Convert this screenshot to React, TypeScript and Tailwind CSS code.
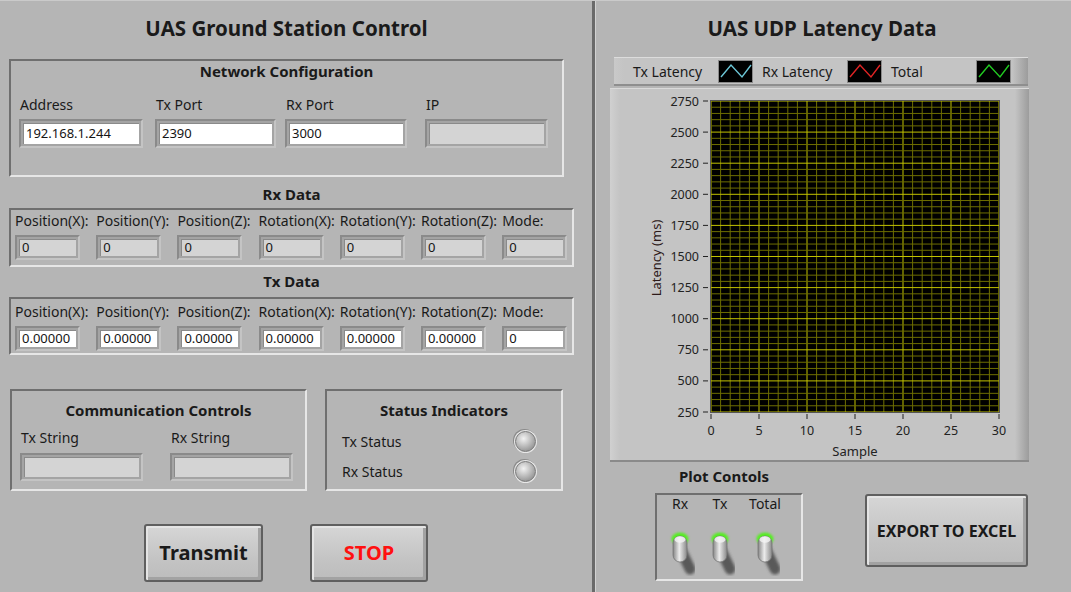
import React from "react";

const GROUP =
  "border-2 border-t-[#6f6f6f] border-l-[#6f6f6f] border-b-[#e6e6e6] border-r-[#e6e6e6]";

function Field({
  className,
  value,
  light,
}: {
  className: string;
  value?: string;
  light?: boolean;
}) {
  return (
    <div
      className={`${className} border-2 border-t-[#8a8a8a] border-l-[#8a8a8a] border-b-[#c4c4c4] border-r-[#c4c4c4] bg-[#a4a4a4] p-[2px]`}
    >
      <div
        className={`h-full ${
          light ? "bg-white" : "bg-[#d4d4d4]"
        } shadow-[inset_1px_1px_0_#8a8a8a] text-[13px] leading-none flex items-center pl-[3px] text-[#151515] whitespace-nowrap overflow-hidden`}
      >
        {value}
      </div>
    </div>
  );
}

function LED() {
  return (
    <div className="w-[23px] h-[23px] rounded-full bg-[#e8e8e8] p-[1px] shadow-[-1px_-1px_0_#8a8a8a]">
      <div className="w-full h-full rounded-full border border-[#777] bg-[radial-gradient(circle_at_40%_35%,#f2f2f2_0%,#c2c2c2_40%,#8c8c8c_85%)]" />
    </div>
  );
}

function Toggle() {
  return (
    <svg width="40" height="46" viewBox="0 0 40 46">
      <defs>
        <filter id="tb" x="-50%" y="-50%" width="200%" height="200%">
          <feGaussianBlur stdDeviation="1.4" />
        </filter>
        <filter id="gb" x="-50%" y="-50%" width="200%" height="200%">
          <feGaussianBlur stdDeviation="1.1" />
        </filter>
        <linearGradient id="lev" x1="0" x2="1" y1="0" y2="0">
          <stop offset="0" stopColor="#858585" />
          <stop offset="0.45" stopColor="#ececec" />
          <stop offset="1" stopColor="#888" />
        </linearGradient>
      </defs>
      <line x1="21" y1="20" x2="30" y2="39" stroke="#4a4a4a" strokeWidth="11" strokeLinecap="round" opacity="0.85" filter="url(#tb)" />
      <ellipse cx="20" cy="9" rx="8.5" ry="6.5" fill="#55ee22" filter="url(#gb)" />
      <rect x="13" y="6" width="14" height="26" rx="7" fill="url(#lev)" stroke="#6e6e6e" strokeWidth="0.7" />
      <ellipse cx="20" cy="9.5" rx="5.5" ry="3.2" fill="#f4f4f4" opacity="0.8" />
    </svg>
  );
}

function Swatch({ color }: { color: string }) {
  return (
    <svg width="35" height="23" viewBox="0 0 35 23" className="block">
      <rect x="0.5" y="0.5" width="34" height="22" fill="#000" stroke="#8a8a8a" />
      <polyline points="3,17 13,5 24,17 33,5" fill="none" stroke={color} strokeWidth="1.4" />
    </svg>
  );
}

function Graph() {
  const px0 = 101,
    px1 = 389,
    py0 = 12,
    py1 = 323;
  const w = px1 - px0;
  const h = py1 - py0;
  const vMinor: number[] = [];
  for (let i = 0; i <= 30; i++) vMinor.push(px0 + (w * i) / 30);
  const hMinor: number[] = [];
  for (let i = 0; i <= 50; i++) hMinor.push(py0 + (h * i) / 50);
  const yLabels = [2750, 2500, 2250, 2000, 1750, 1500, 1250, 1000, 750, 500, 250];
  const xLabels = [0, 5, 10, 15, 20, 25, 30];
  return (
    <svg width="419" height="374" viewBox="0 0 419 374" className="block">
      <rect x={px0} y={py0} width={w} height={h} fill="#000" />
      {vMinor.map((x, i) => (
        <line key={"v" + i} x1={x} x2={x} y1={py0} y2={py1} stroke={i % 5 === 0 ? "#c2c200" : "#6e6e00"} strokeWidth="1" />
      ))}
      {hMinor.map((y, i) => (
        <line key={"h" + i} x1={px0} x2={px1} y1={y} y2={y} stroke={i % 5 === 0 ? "#c2c200" : "#6e6e00"} strokeWidth="1" />
      ))}
      <rect x={px0 - 0.5} y={py0 - 0.5} width={w + 1} height={h + 1} fill="none" stroke="#555" />
      {yLabels.map((v, i) => {
        const y = py0 + (h * i) / 10;
        return (
          <g key={v}>
            <line x1={93} x2={98} y1={y} y2={y} stroke="#222" />
            <text x={89} y={y + 4.5} textAnchor="end" fontSize="12.5" fill="#222" fontFamily="'Noto Sans', sans-serif">
              {v}
            </text>
          </g>
        );
      })}
      {xLabels.map((v, i) => {
        const x = px0 + (w * i) / 6;
        return (
          <g key={v}>
            <line x1={x} x2={x} y1={325} y2={330} stroke="#222" />
            <text x={x} y={346} textAnchor="middle" fontSize="12.5" fill="#222" fontFamily="'Noto Sans', sans-serif">
              {v}
            </text>
          </g>
        );
      })}
      <text x={245} y={367} textAnchor="middle" fontSize="13" fill="#222" fontFamily="'Noto Sans', sans-serif">
        Sample
      </text>
      <text
        x={0}
        y={0}
        transform="translate(51 169) rotate(-90)"
        textAnchor="middle"
        fontSize="13"
        fill="#2d1a1a"
        fontFamily="'Noto Sans', sans-serif"
      >
        Latency (ms)
      </text>
    </svg>
  );
}

const BTN =
  "rounded-[3px] border-2 border-[#5f5f5f] bg-[linear-gradient(to_bottom,#d6d6d6,#c4c4c4_60%,#bcbcbc)] shadow-[inset_2px_2px_0_#e4e4e4,inset_-3px_-3px_0_#a2a2a2] flex items-center justify-center font-bold";

export default function App() {
  const cols = [
    "Position(X):",
    "Position(Y):",
    "Position(Z):",
    "Rotation(X):",
    "Rotation(Y):",
    "Rotation(Z):",
    "Mode:",
  ];
  return (
    <div className="w-[1071px] h-[592px] bg-[#b5b5b5] flex font-['Noto_Sans',sans-serif] text-[#1a1a1a] overflow-hidden border-t border-[#cacaca]">
      {/* LEFT PANEL */}
      <div className="w-[592px] flex flex-col shrink-0">
        <div className="ml-[9px] w-[555px] mt-[13px] h-[28px] text-center text-[20.5px] font-bold leading-[28px]">
          UAS Ground Station Control
        </div>
        <div className={`ml-[9px] w-[555px] h-[118px] mt-[17px] ${GROUP}`}>
          <div className="h-[20px] leading-[20px] text-center text-[15px] font-bold">Network Configuration</div>
          <div className="flex mt-[14px] pl-[8px]">
            <div className="w-[124px]">
              <div className="h-[20px] leading-[20px] text-[14px] pl-[1px]">Address</div>
              <Field className="mt-[4px] h-[29px]" value="192.168.1.244" light />
            </div>
            <div className="w-[121px] ml-[12px]">
              <div className="h-[20px] leading-[20px] text-[14px] pl-[1px]">Tx Port</div>
              <Field className="mt-[4px] h-[29px]" value="2390" light />
            </div>
            <div className="w-[122px] ml-[9px]">
              <div className="h-[20px] leading-[20px] text-[14px] pl-[1px]">Rx Port</div>
              <Field className="mt-[4px] h-[29px]" value="3000" light />
            </div>
            <div className="w-[123px] ml-[18px]">
              <div className="h-[20px] leading-[20px] text-[14px] pl-[1px]">IP</div>
              <Field className="mt-[4px] h-[29px]" />
            </div>
          </div>
        </div>

        <div className="ml-[9px] w-[565px] mt-[7px] h-[20px] leading-[20px] text-center text-[15px] font-bold">Rx Data</div>
        <div className={`ml-[9px] w-[565px] h-[59px] mt-[4px] ${GROUP}`}>
          <div className="flex pl-[4px] mt-[2px] gap-[16.2px]">
            {cols.map((c) => (
              <div key={c} className="w-[65px] shrink-0">
                <div className="h-[18px] leading-[18px] text-[14px] whitespace-nowrap">{c}</div>
                <Field className="mt-[5px] h-[25px]" value="0" />
              </div>
            ))}
          </div>
        </div>

        <div className="ml-[9px] w-[565px] mt-[4px] h-[20px] leading-[20px] text-center text-[15px] font-bold">Tx Data</div>
        <div className={`ml-[9px] w-[565px] h-[58px] mt-[6px] ${GROUP}`}>
          <div className="flex pl-[4px] mt-[4px] gap-[16.2px]">
            {cols.map((c, i) => (
              <div key={c} className="w-[65px] shrink-0">
                <div className="h-[18px] leading-[18px] text-[14px] whitespace-nowrap">{c}</div>
                <Field className="mt-[5px] h-[25px]" value={i === 6 ? "0" : "0.00000"} light />
              </div>
            ))}
          </div>
        </div>

        <div className="flex mt-[34px] h-[102px]">
          <div className={`ml-[10px] w-[297px] h-full ${GROUP}`}>
            <div className="mt-[9px] h-[20px] leading-[20px] text-center text-[15px] font-bold">Communication Controls</div>
            <div className="flex pl-[8px] mt-[8px]">
              <div className="w-[123px]">
                <div className="h-[20px] leading-[20px] text-[14px] pl-[1px]">Tx String</div>
                <Field className="mt-[5px] h-[28px]" />
              </div>
              <div className="w-[123px] ml-[27px]">
                <div className="h-[20px] leading-[20px] text-[14px] pl-[1px]">Rx String</div>
                <Field className="mt-[5px] h-[28px]" />
              </div>
            </div>
          </div>
          <div className={`ml-[18px] w-[238px] h-full ${GROUP}`}>
            <div className="mt-[9px] h-[20px] leading-[20px] text-center text-[15px] font-bold">Status Indicators</div>
            <div className="mt-[9px] h-[24px] flex items-center justify-between pl-[15px] pr-[24px]">
              <span className="text-[14px]">Tx Status</span>
              <LED />
            </div>
            <div className="mt-[6px] h-[24px] flex items-center justify-between pl-[15px] pr-[24px]">
              <span className="text-[14px]">Rx Status</span>
              <LED />
            </div>
          </div>
        </div>

        <div className="flex mt-[33px]">
          <div className={`ml-[144px] w-[119px] h-[58px] text-[20px] ${BTN}`}>Transmit</div>
          <div className={`ml-[47px] w-[118px] h-[58px] text-[20px] text-[#ff1010] ${BTN}`}>STOP</div>
        </div>
      </div>

      {/* DIVIDER */}
      <div className="w-[3px] bg-[#6a6a6a] shrink-0" />
      <div className="w-[1px] bg-[#d2d2d2] shrink-0" />

      {/* RIGHT PANEL */}
      <div className="flex-1 flex flex-col">
        <div className="ml-[14px] w-[419px] flex flex-col">
          <div className="mt-[13px] h-[28px] text-center text-[20.5px] font-bold leading-[28px] pl-[5px]">UAS UDP Latency Data</div>
          <div className="ml-[4px] w-[414px] h-[29px] mt-[15px] flex items-center border-t border-[#dcdcdc] border-b-2 border-b-[#8e8e8e] bg-[linear-gradient(to_right,#c9c9c9_0px,#c4c4c4_10px,#c4c4c4_calc(100%_-_16px),#9c9c9c_100%)] text-[14px]">
            <span className="ml-[19px] w-[85px]">Tx Latency</span>
            <Swatch color="#6cc6d6" />
            <span className="ml-[9px] w-[85px]">Rx Latency</span>
            <Swatch color="#e02424" />
            <span className="ml-[9px] w-[85px]">Total</span>
            <Swatch color="#22cc22" />
          </div>
          <div className="mt-[2px] w-[419px] h-[374px] border-t border-[#dadada] border-b-2 border-b-[#8a8a8a] bg-[linear-gradient(to_right,#d0d0d0_0px,#c4c4c4_10px,#c4c4c4_calc(100%_-_14px),#9c9c9c_100%)]">
            <Graph />
          </div>
        </div>
        <div className="flex">
          <div className="ml-[59px] w-[148px] flex flex-col">
            <div className="mt-[4px] h-[20px] leading-[20px] text-center text-[15px] font-bold pr-[10px]">Plot Contols</div>
            <div className={`mt-[7px] h-[88px] ${GROUP}`}>
              <div className="flex pl-[3px]">
                {["Rx", "Tx", "Total"].map((l, i) => (
                  <div key={l} className={`w-[40px] flex flex-col items-center ${i === 2 ? "ml-[5px]" : ""}`}>
                    <div className="h-[18px] leading-[18px] text-[14px]">{l}</div>
                    <div className="mt-[17px]">
                      <Toggle />
                    </div>
                  </div>
                ))}
              </div>
            </div>
          </div>
          <div className={`ml-[62px] mt-[32px] w-[163px] h-[73px] text-[16px] ${BTN}`}>EXPORT TO EXCEL</div>
        </div>
      </div>
    </div>
  );
}
